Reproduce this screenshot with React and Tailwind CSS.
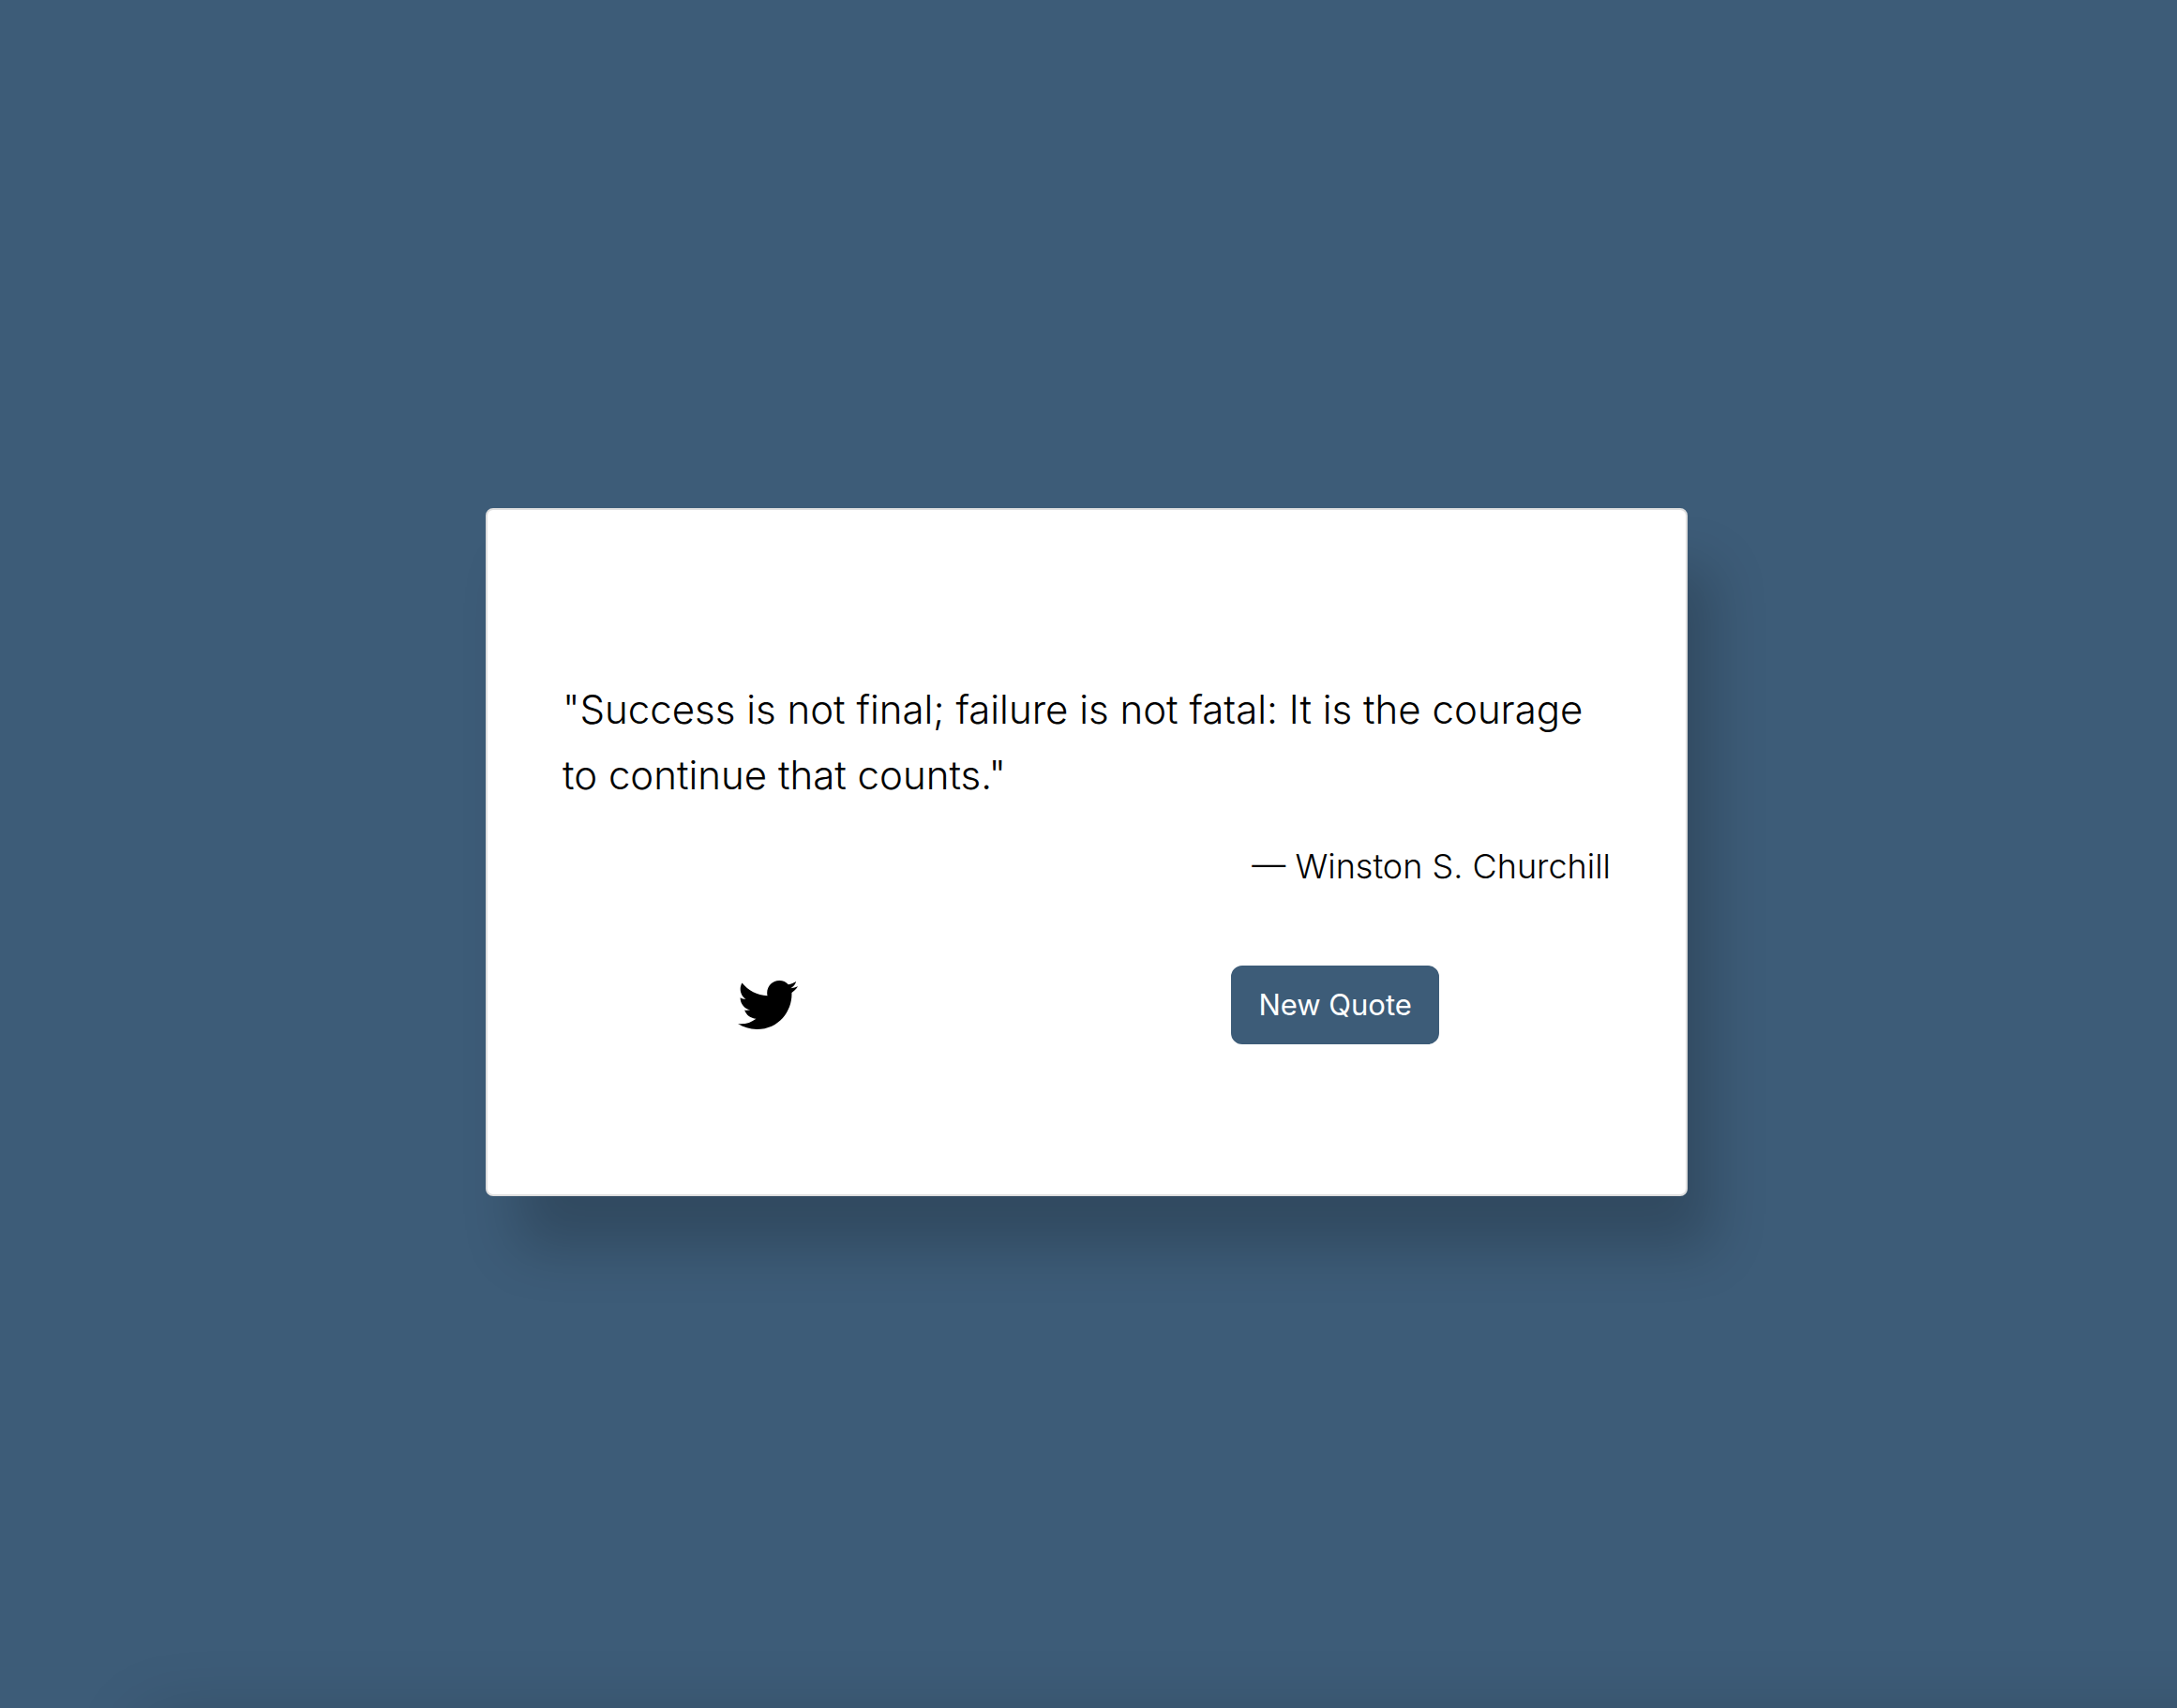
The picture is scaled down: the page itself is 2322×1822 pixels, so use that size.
import { FaTwitter } from "react-icons/fa";

export default function App() {
  return (
    <div className="flex h-screen flex-col overflow-hidden bg-[#3d5c78] font-['Inter',sans-serif] text-black">
      <main className="flex flex-1 items-center justify-center pr-1 pb-1">
        <section className="w-full max-w-[1282px] rounded-lg border-2 border-[#dfdfdf] bg-white px-8 pt-[178px] pb-[160px] shadow-[30px_60px_60px_-4px_rgba(0,0,0,0.2)]">
          <blockquote className="px-12 font-light">
            <p className="text-[42px] leading-[70px]">
              "Success is not final; failure is not fatal: It is the courage to
              continue that counts."
            </p>
            <footer className="mt-8 text-right text-[36px] leading-[60px]">
              — Winston S. Churchill
            </footer>
          </blockquote>
          <div className="mt-[76px] flex items-center justify-around pl-1">
            <a href="#tweet" aria-label="Tweet this quote">
              <FaTwitter className="size-16" />
            </a>
            <button
              type="button"
              className="rounded-xl border-4 border-[#3d5c78] bg-[#3d5c78] px-[25px] py-3.5 text-[31px] leading-[48px] text-white"
            >
              New Quote
            </button>
          </div>
        </section>
      </main>
      <div className="ml-[190px] h-0 shadow-[30px_80px_80px_64px_rgba(0,0,0,0.2)]" />
    </div>
  );
}
